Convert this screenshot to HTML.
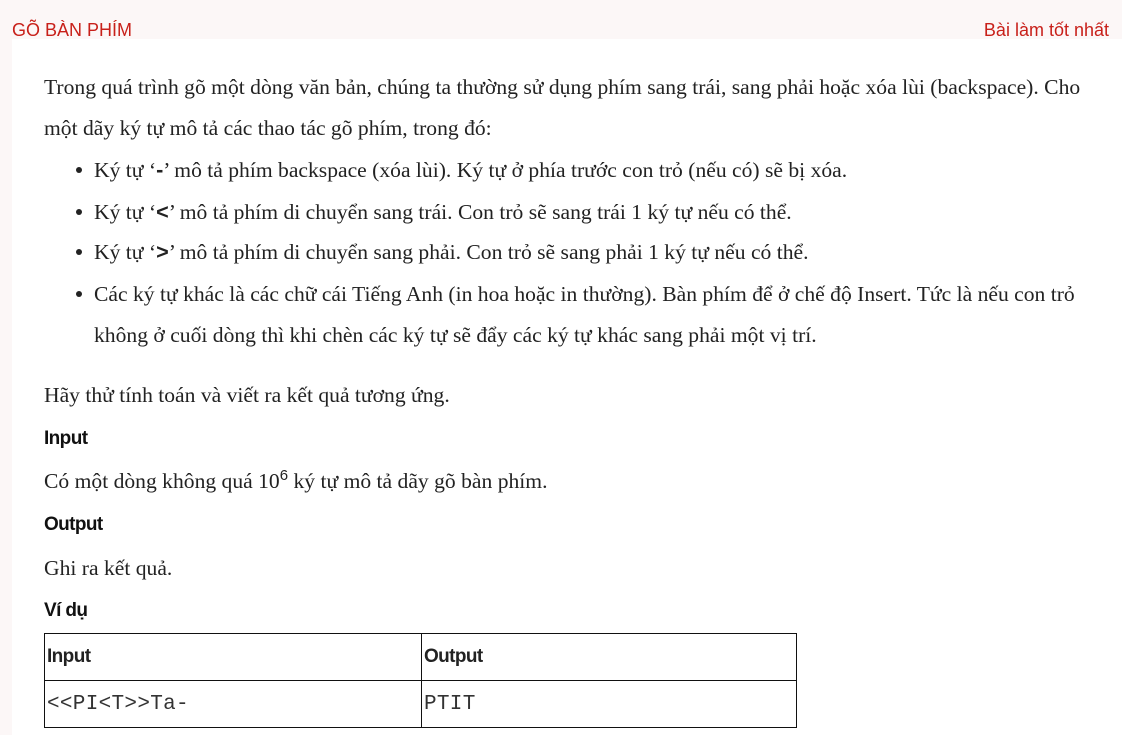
<!DOCTYPE html>
<html><head><meta charset="utf-8"><style>
*{margin:0;padding:0;box-sizing:border-box}
body{width:1122px;height:735px;overflow:hidden;background:#fcf7f7;position:relative;font-family:"Liberation Serif",serif;color:#222}
.t{position:absolute;white-space:nowrap}
.hdr{font-family:"Liberation Sans",sans-serif;font-size:18px;color:#c8201a;top:20px}
.panel{position:absolute;left:12px;top:39px;right:0;bottom:0;background:#fff}
.p{font-size:21.6px;line-height:24px}
.h{font-family:"Liberation Sans",sans-serif;font-size:19px;font-weight:bold;letter-spacing:-0.6px;color:#111}
.dot{position:absolute;width:6px;height:6px;border-radius:50%;background:#222}
b{font-family:"Liberation Sans",sans-serif}
table{position:absolute;left:44px;top:633px;border-collapse:collapse;width:753px}
td{border:1.5px solid #111;height:47px;padding:0 2px;vertical-align:middle}
td.h1{font-family:"Liberation Sans",sans-serif;font-weight:bold;font-size:19px;letter-spacing:-0.6px}
td.m{font-family:"Liberation Mono",monospace;font-size:21px;color:#333;letter-spacing:0.3px}
</style></head><body>
<div class="t hdr" style="left:12px">GÕ BÀN PHÍM</div>
<div class="t hdr" style="right:13px">Bài làm tốt nhất</div>
<div class="panel"></div>
<div class="t p" style="left:44px;top:75px">Trong quá trình gõ một dòng văn bản, chúng ta thường sử dụng phím sang trái, sang phải hoặc xóa lùi (backspace). Cho</div>
<div class="t p" style="left:44px;top:116px">một dãy ký tự mô tả các thao tác gõ phím, trong đó:</div>
<div class="dot" style="left:76px;top:167px"></div>
<div class="t p" style="left:94px;top:158px">Ký tự ‘<b>-</b>’ mô tả phím backspace (xóa lùi). Ký tự ở phía trước con trỏ (nếu có) sẽ bị xóa.</div>
<div class="dot" style="left:76px;top:209px"></div>
<div class="t p" style="left:94px;top:200px">Ký tự ‘<b>&lt;</b>’ mô tả phím di chuyển sang trái. Con trỏ sẽ sang trái 1 ký tự nếu có thể.</div>
<div class="dot" style="left:76px;top:249px"></div>
<div class="t p" style="left:94px;top:240px">Ký tự ‘<b>&gt;</b>’ mô tả phím di chuyển sang phải. Con trỏ sẽ sang phải 1 ký tự nếu có thể.</div>
<div class="dot" style="left:76px;top:291px"></div>
<div class="t p" style="left:94px;top:282px">Các ký tự khác là các chữ cái Tiếng Anh (in hoa hoặc in thường). Bàn phím để ở chế độ Insert. Tức là nếu con trỏ</div>
<div class="t p" style="left:94px;top:323px">không ở cuối dòng thì khi chèn các ký tự sẽ đẩy các ký tự khác sang phải một vị trí.</div>
<div class="t p" style="left:44px;top:383px">Hãy thử tính toán và viết ra kết quả tương ứng.</div>
<div class="t h" style="left:44px;top:428px">Input</div>
<div class="t p" style="left:44px;top:469px">Có một dòng không quá 10<sup style="font-family:'Liberation Sans',sans-serif;font-size:15px;vertical-align:8px;line-height:0">6</sup> ký tự mô tả dãy gõ bàn phím.</div>
<div class="t h" style="left:44px;top:514px">Output</div>
<div class="t p" style="left:44px;top:556px">Ghi ra kết quả.</div>
<div class="t h" style="left:44px;top:600px">Ví dụ</div>
<table><tr><td class="h1" style="width:377px">Input</td><td class="h1">Output</td></tr>
<tr><td class="m">&lt;&lt;PI&lt;T&gt;&gt;Ta-</td><td class="m">PTIT</td></tr></table>
</body></html>
